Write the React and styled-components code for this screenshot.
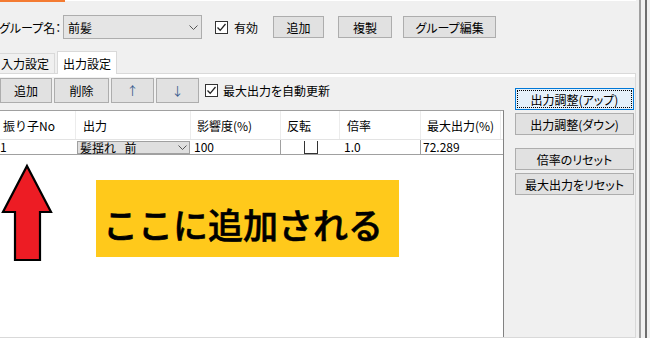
import React from 'react';
import styled, { createGlobalStyle } from 'styled-components';

const GlobalStyle = createGlobalStyle`
  * { box-sizing: border-box; }
  body {
    margin: 0;
    background: #f0f0f0;
    font-family: "Noto Sans CJK JP", "Noto Sans", sans-serif;
    font-size: 12px;
    color: #000;
    font-feature-settings: "palt";
  }
`;

const Window = styled.div`
  width: 650px;
  height: 338px;
  overflow: hidden;
  display: flex;
  background: #f0f0f0;
`;

const Main = styled.div`
  width: 636px;
  display: flex;
  flex-direction: column;
`;

const RightEdge = styled.div`
  width: 14px;
  background: linear-gradient(to right, #f0f0f0 0 3px, #a0a0a0 3px 5px, #f0f0f0 5px 9px, #6d6d6d 9px 11px, #f0f0f0 11px);
`;

const TopStrip = styled.div`
  height: 3px;
  border-top: 1px solid #fff;
  position: relative;
`;

const OrangeBar = styled.div`
  position: absolute;
  left: 0;
  top: -1px;
  width: 65px;
  height: 2px;
  background: #f47b32;
`;

const GroupRow = styled.div`
  margin-top: 12px;
  height: 24px;
  display: flex;
  align-items: center;
`;

const GroupLabel = styled.div`
  width: 64px;
  margin-left: -1px;
  padding-right: 6px;
  white-space: nowrap;
  text-align: right;
`;

const Combo = styled.div`
  width: ${({ $w }) => $w}px;
  height: 24px;
  background: #e5e5e5;
  border: 1px solid #adadad;
  display: flex;
  align-items: center;
  justify-content: space-between;
  padding: 0 3px 0 4px;
`;

const Check = styled.div`
  width: 13px;
  height: 13px;
  border: 1px solid #333;
  background: #fff;
  display: flex;
  align-items: center;
  justify-content: center;
  margin-left: ${({ $ml }) => $ml || 0}px;
  flex: none;
`;

const CheckLabel = styled.span`
  margin-left: ${({ $ml }) => $ml || 6}px;
  white-space: nowrap;
`;

const Button = styled.div`
  width: ${({ $w }) => $w}px;
  height: ${({ $h }) => $h || 22}px;
  margin-left: ${({ $ml }) => $ml || 0}px;
  background: #e1e1e1;
  border: 1px solid #adadad;
  display: flex;
  align-items: center;
  justify-content: center;
  white-space: nowrap;
  flex: none;
  color: ${({ $arrow }) => ($arrow ? '#3a5f8f' : '#000')};
`;

const FocusButton = styled(Button)`
  background: #e5f1fb;
  border-color: #0078d7;
  position: relative;
  &::after {
    content: '';
    position: absolute;
    inset: 1px;
    border: 1px dotted #000;
  }
`;

const TabStrip = styled.div`
  margin-top: 12px;
  height: 22px;
  display: flex;
  align-items: flex-end;
  gap: 2px;
`;

const Tab = styled.div`
  height: ${({ $active }) => ($active ? 23 : 20)}px;
  margin-bottom: ${({ $active }) => ($active ? -1 : 0)}px;
  margin-left: ${({ $ml }) => $ml || 0}px;
  padding: 0 5px;
  border: 1px solid #d9d9d9;
  border-bottom: none;
  background: ${({ $active }) => ($active ? '#fff' : '#f0f0f0')};
  display: flex;
  align-items: center;
  position: relative;
  z-index: 1;
  font-feature-settings: normal;
`;

const Panel = styled.div`
  flex: 1;
  margin-left: -1px;
  border: 1px solid #d9d9d9;
  background: #fff;
  padding-top: 3px;
  display: flex;
`;

const PanelInner = styled.div`
  flex: 1;
  background: #f0f0f0;
  display: flex;
`;

const LeftCol = styled.div`
  width: 504px;
  display: flex;
  flex-direction: column;
`;

const Toolbar = styled.div`
  margin-top: 1px;
  height: 24px;
  display: flex;
  align-items: center;
`;

const Table = styled.div`
  margin-top: 8px;
  flex: 1;
  background: #fff;
  border-top: 1px solid #a0a0a0;
  border-right: 1px solid #828282;
  display: flex;
  flex-direction: column;
`;

const HeaderRow = styled.div`
  height: 29px;
  display: flex;
  border-bottom: 1px solid #e3e3e3;
`;

const HeaderCell = styled.div`
  width: ${({ $w }) => $w}px;
  padding-left: ${({ $pl }) => $pl}px;
  border-right: 1px solid #ececec;
  display: flex;
  align-items: center;
  white-space: nowrap;
  font-feature-settings: normal;
`;

const DataRow = styled.div`
  height: 15px;
  display: flex;
  border-bottom: 1px solid #a0a0a0;
`;

const DataCell = styled.div`
  width: ${({ $w }) => $w}px;
  padding-left: ${({ $pl }) => $pl || 0}px;
  border-right: 1px solid ${({ $line }) => ($line ? '#a0a0a0' : 'transparent')};
  display: flex;
  align-items: center;
  white-space: nowrap;
  line-height: 14px;
`;

const CellCombo = styled.div`
  width: 114px;
  height: 13px;
  margin: 1px 0 0 1px;
  background: #dfdfdf;
  border: 1px solid #a0a0a0;
  display: flex;
  align-items: center;
  justify-content: space-between;
  padding: 0 2px 0 2px;
  font-feature-settings: normal;
  white-space: pre;
`;

const CellCheck = styled.div`
  width: 14px;
  height: 13px;
  margin: 0 0 0 23px;
  align-self: flex-end;
  border: 1px solid #333;
  border-top: none;
`;

const TableBody = styled.div`
  position: relative;
  flex: 1;
`;

const RightPanel = styled.div`
  flex: 1;
  padding: 11px 0 0 11px;
  display: flex;
  flex-direction: column;
`;

const Spacer = styled.div`
  height: ${({ $h }) => $h}px;
`;

const ArrowMark = styled.svg`
  position: absolute;
  left: 0;
  top: 8px;
`;

const Callout = styled.div`
  position: absolute;
  left: 96px;
  top: 25px;
  width: 303px;
  height: 77px;
  background: #ffc91b;
  padding: 25px 0 0 7px;
  font-size: 35px;
  line-height: 37px;
  font-weight: 500;
  font-feature-settings: normal;
  color: #000;
  white-space: nowrap;
  -webkit-text-stroke: 0.6px #000;
`;

const Chevron = () => (
  <svg width="9" height="5" viewBox="0 0 9 5">
    <polyline points="0.5,0.5 4.5,4.5 8.5,0.5" fill="none" stroke="#555" strokeWidth="1" />
  </svg>
);

const Tick = () => (
  <svg width="11" height="11" viewBox="0 0 11 11">
    <polyline points="1.5,5.5 4.2,8.3 9.5,2" fill="none" stroke="#222" strokeWidth="1.3" />
  </svg>
);

const columns = [
  { label: '振り子No', w: 76, pl: 3 },
  { label: '出力', w: 115, pl: 7 },
  { label: '影響度(%)', w: 90, pl: 6 },
  { label: '反転', w: 59, pl: 6 },
  { label: '倍率', w: 81, pl: 7 },
  { label: '最大出力(%)', w: 80, pl: 6 },
];

const App = () => {
  return (
    <>
      <GlobalStyle />
      <Window>
        <Main>
          <TopStrip>
            <OrangeBar />
          </TopStrip>
          <GroupRow>
            <GroupLabel>グループ名：</GroupLabel>
            <Combo $w={139}>
              <span>前髪</span>
              <Chevron />
            </Combo>
            <Check $ml={13}><Tick /></Check>
            <CheckLabel>有効</CheckLabel>
            <Button $w={51} $ml={15}>追加</Button>
            <Button $w={54} $ml={14}>複製</Button>
            <Button $w={93} $ml={11}>グループ編集</Button>
          </GroupRow>
          <TabStrip>
            <Tab $ml={-5}>入力設定</Tab>
            <Tab $active>出力設定</Tab>
          </TabStrip>
          <Panel>
            <PanelInner>
              <LeftCol>
                <Toolbar>
                  <Button $w={52} $h={25}>追加</Button>
                  <Button $w={55} $h={25} $ml={2}>削除</Button>
                  <Button $w={43} $h={25} $ml={2} $arrow>↑</Button>
                  <Button $w={43} $h={25} $ml={2} $arrow>↓</Button>
                  <Check $ml={6}><Tick /></Check>
                  <CheckLabel $ml={5}>最大出力を自動更新</CheckLabel>
                </Toolbar>
                <Table>
                  <HeaderRow>
                    {columns.map((c) => (
                      <HeaderCell key={c.label} $w={c.w} $pl={c.pl}>{c.label}</HeaderCell>
                    ))}
                  </HeaderRow>
                  <DataRow>
                    <DataCell $w={76}>1</DataCell>
                    <DataCell $w={115}>
                      <CellCombo>
                        <span>{'髪揺れ\u2002\u2009前'}</span>
                        <Chevron />
                      </CellCombo>
                    </DataCell>
                    <DataCell $w={90} $pl={3} $line>100</DataCell>
                    <DataCell $w={59}>
                      <CellCheck />
                    </DataCell>
                    <DataCell $w={81} $pl={4} $line>1.0</DataCell>
                    <DataCell $w={80} $pl={2}>72.289</DataCell>
                  </DataRow>
                  <TableBody>
                    <ArrowMark width="56" height="100" viewBox="0 0 56 100">
                      <polygon
                        points="27,3 51,49 40,49 40,97 15,97 15,49 3,49"
                        fill="#ed1c24"
                        stroke="#000"
                        strokeWidth="2.2"
                        strokeLinejoin="miter"
                      />
                    </ArrowMark>
                    <Callout>ここに追加される</Callout>
                  </TableBody>
                </Table>
              </LeftCol>
              <RightPanel>
                <FocusButton $w={119}>出力調整(アップ)</FocusButton>
                <Spacer $h={3} />
                <Button $w={119}>出力調整(ダウン)</Button>
                <Spacer $h={13} />
                <Button $w={119}>倍率のリセット</Button>
                <Spacer $h={3} />
                <Button $w={119}>最大出力をリセット</Button>
              </RightPanel>
            </PanelInner>
          </Panel>
        </Main>
        <RightEdge />
      </Window>
    </>
  );
};

export default App;
